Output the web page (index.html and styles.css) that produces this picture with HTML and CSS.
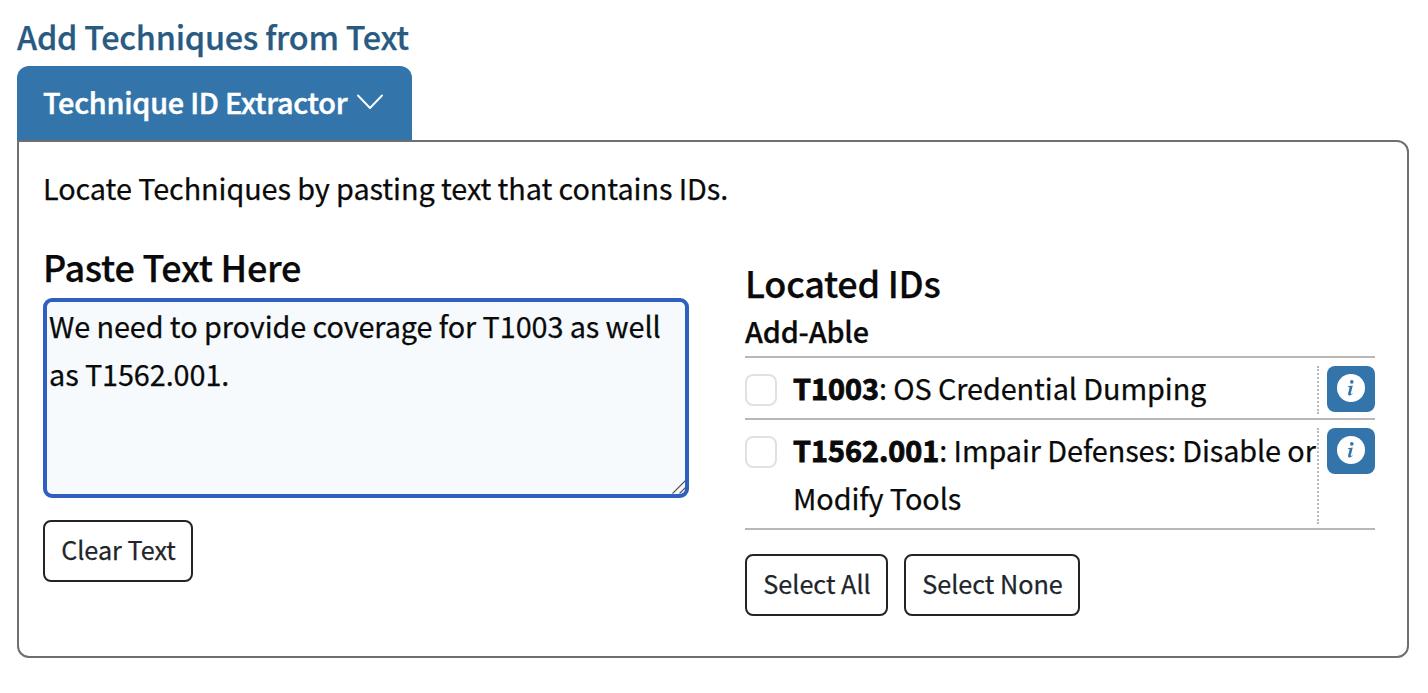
FILE: index.html
```html
<!DOCTYPE html>
<html lang="en">
<head>
<meta charset="utf-8">
<title>Add Techniques from Text</title>
<link rel="stylesheet" href="styles.css">
</head>
<body>
<main class="page">
  <h2 class="page-title">Add Techniques from Text</h2>
  <div class="tab"><span>Technique ID Extractor</span>
    <svg class="chevron" width="28" height="18" viewBox="0 0 28 18"><path d="M2 2.500 14 15 26 2.500" fill="none" stroke="#fff" stroke-width="1.9" stroke-linecap="round" stroke-linejoin="round"/></svg>
  </div>
  <section class="panel">
    <p class="intro">Locate Techniques by pasting text that contains IDs.</p>
    <div class="columns">
      <div class="paste">
        <h3 class="heading">Paste Text Here</h3>
        <div class="field">
          <textarea class="input" spellcheck="false">We need to provide coverage for T1003 as well as T1562.001.</textarea>
          <svg class="grip" width="14" height="14" viewBox="0 0 14 14"><path d="M.5 13.5 13.5.5M7.5 13.5l6-6" fill="none" stroke="#555" stroke-width="1.1"/></svg>
        </div>
        <button class="btn btn-clear">Clear Text</button>
      </div>
      <div class="located">
        <h3 class="heading">Located IDs</h3>
        <h4 class="subheading">Add-Able</h4>
        <ul class="list">
          <li class="item">
            <span class="check"></span>
            <span class="label"><span class="name"><b>T1003</b>: OS Credential Dumping</span></span>
            <span class="info"><svg class="info-icon" width="28" height="28" viewBox="0 0 28 28"><circle cx="14" cy="14" r="14" fill="#fff"/><circle cx="14.8" cy="7.900" r="1.8" fill="#3375aa"/><path d="M10.800 12.300l5-.7-2 7.600c-.2 1 .4 1 1.400.1l.4.5c-2.600 2.400-5 2.300-4.500-.2l1.400-5.500c.2-.9 0-1.100-1.700-1.300z" fill="#3375aa"/></svg></span>
          </li>
          <li class="item">
            <span class="check"></span>
            <span class="label"><span class="name"><b>T1562.001</b>: Impair Defenses: Disable or<br>Modify Tools</span></span>
            <span class="info"><svg class="info-icon" width="28" height="28" viewBox="0 0 28 28"><circle cx="14" cy="14" r="14" fill="#fff"/><circle cx="14.8" cy="7.900" r="1.8" fill="#3375aa"/><path d="M10.800 12.300l5-.7-2 7.600c-.2 1 .4 1 1.400.1l.4.5c-2.600 2.400-5 2.300-4.500-.2l1.400-5.500c.2-.9 0-1.100-1.700-1.300z" fill="#3375aa"/></svg></span>
          </li>
        </ul>
        <div class="actions">
          <button class="btn btn-all">Select All</button>
          <button class="btn btn-none">Select None</button>
        </div>
      </div>
    </div>
  </section>
</main>
</body>
</html>
```

FILE: styles.css
```css
* { box-sizing: border-box; }
body {
  margin: 0;
  background: #fff;
  color: #0a0a0a;
  font: 28.8px/48px "Noto Sans CJK SC", "Noto Sans", sans-serif;
  letter-spacing: -0.08px;
  -webkit-text-stroke: 0.25px currentColor;
}
h2, h3, h4, p, ul { margin: 0; padding: 0; }
.page { padding: 12px 19px 0 17px; }
.page-title {
  height: 54px;
  font-size: 32.4px;
  line-height: 48px;
  font-weight: 500;
  letter-spacing: -0.25px;
  color: #285a82;
}
.tab {
  display: flex;
  align-items: flex-start;
  width: 395px;
  height: 74px;
  padding: 12px 0 0 26px;
  border-radius: 12px 12px 0 0;
  background: #3375aa;
  color: #fff;
  font-weight: 500;
  letter-spacing: -0.23px;
  white-space: nowrap;
  -webkit-text-stroke-width: 0.5px;
}
.chevron { margin: 15px 0 0 9px; }
.panel {
  height: 518px;
  padding: 22px 32px 0 24px;
  border: 2px solid #6f6f6f;
  border-radius: 0 12px 12px 12px;
}
.columns { display: flex; gap: 56px; }
.paste { width: 646px; padding-top: 30px; }
.located { width: 630px; padding-top: 46px; }
.heading {
  height: 56px;
  font-size: 36px;
  line-height: 48px;
  font-weight: 500;
  letter-spacing: -0.27px;
  white-space: nowrap;
}
.located .heading { height: 50px; }
.field { position: relative; height: 200px; }
.input {
  display: block;
  width: 100%;
  height: 100%;
  padding: 0 2px;
  border: 4px solid #2f5fc0;
  border-radius: 9px;
  background: #f6fafd;
  color: #0a0a0a;
  font: inherit;
  letter-spacing: inherit;
  outline: none;
  resize: none;
  overflow: hidden;
}
.grip { position: absolute; right: 3px; bottom: 4px; }
.btn {
  height: 62px;
  padding: 0 0 4px 1px;
  border: 2px solid #212529;
  border-radius: 8px;
  background: #fff;
  color: #212529;
  font-family: inherit;
  font-size: 25.2px;
  line-height: 42px;
  white-space: nowrap;
}
.btn-clear { display: block; width: 150px; margin-top: 22px; }
.btn-all { width: 143px; }
.btn-none { width: 176px; }
.subheading {
  height: 48px;
  font-size: 28.8px;
  line-height: 46px;
  font-weight: 500;
  letter-spacing: -0.2px;
}
.list { list-style: none; border-top: 2px solid #b8b8b8; }
.item {
  display: flex;
  padding: 8px 0 4px;
  border-bottom: 2px solid #b8b8b8;
}
.check {
  width: 32px;
  height: 32px;
  margin: 8px 16px 0 0;
  border: 2px solid #dfe1e3;
  border-radius: 8px;
}
.label {
  width: 526px;
  margin-right: 8px;
  border-right: 2px dotted #b8b8b8;
  white-space: nowrap;
}
.name { display: block; margin: -2px 0 2px; }
.label b { letter-spacing: 0; -webkit-text-stroke-width: 0.9px; }
.info {
  width: 48px;
  height: 46px;
  padding: 8px 10px;
  border-radius: 8px;
  background: #3375aa;
}
.info-icon { display: block; }
.actions { display: flex; gap: 16px; margin-top: 24px; }
```
